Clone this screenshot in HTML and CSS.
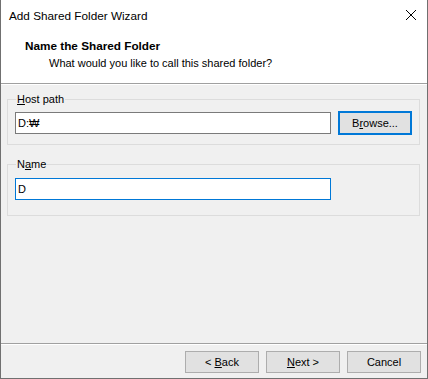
FILE: index.html
```html
<html>
    <head>
        <title>Add Shared Folder Wizard</title>
        <link rel="stylesheet" href="styles.css">
    </head>
    <body>
        <div class="window">
            <div class="titlebar">
                <span class="title">Add Shared Folder Wizard</span>
                <span class="close">
                    <svg width="12" height="12" viewBox="0 0 12 12">
                        <path d="M1 1 L11 11 M11 1 L1 11" stroke="#000" stroke-width="1" fill="none"/>
                    </svg>
                </span>
            </div>
            <div class="header">
                <div class="header-title">Name the Shared Folder</div>
                <div class="header-sub">What would you like to call this shared folder?</div>
            </div>
            <div class="content">
                <fieldset class="group">
                    <legend><u>H</u>ost path</legend>
                    <div class="row host-row">
                        <div class="textbox">D:₩</div>
                        <button class="btn btn-default">B<u>r</u>owse...</button>
                    </div>
                </fieldset>
                <fieldset class="group">
                    <legend>N<u>a</u>me</legend>
                    <div class="row name-row">
                        <div class="textbox focused">D</div>
                    </div>
                </fieldset>
            </div>
            <div class="footer">
                <button class="btn">&lt; <u>B</u>ack</button>
                <button class="btn"><u>N</u>ext &gt;</button>
                <button class="btn">Cancel</button>
            </div>
        </div>
    </body>
</html>
```

FILE: styles.css
```css
* {
    box-sizing: border-box;
}
body {
    margin: 0;
    font-family: "Liberation Sans", Arial, sans-serif;
    font-size: 11px;
    color: #000;
    background: #fff;
}
.window {
    width: 428px;
    height: 379px;
    display: flex;
    flex-direction: column;
    background: #f0f0f0;
    border-left: 1px solid #707070;
    border-right: 1px solid #707070;
    border-bottom: 1px solid #707070;
}
.titlebar {
    height: 30px;
    background: #fff;
    display: flex;
    align-items: center;
    justify-content: space-between;
    padding: 0 8px 0 8px;
}
.title {
    font-size: 11.75px;
}
.close {
    display: flex;
    width: 12px;
    height: 12px;
    margin-right: 2px;
}
.header {
    height: 54px;
    background: #fff;
    padding: 8px 0 0 24px;
    border-bottom: 1px solid #a0a0a0;
    box-shadow: 0 1px 0 #fff;
}
.header-title {
    font-weight: bold;
    font-size: 11.75px;
    line-height: 16px;
}
.header-sub {
    padding-left: 24px;
    line-height: 16px;
    margin-top: 1px;
}
.content {
    flex: 1;
    padding: 7px 7px 0 6px;
}
.group {
    margin: 0 0 11px 0;
    padding: 4px 7px 9px 7px;
    border: 1px solid #dcdcdc;
    min-width: 0;
}
.group legend {
    padding: 0 1px;
    margin-left: 1px;
    line-height: 16px;
}
.row {
    display: flex;
    align-items: center;
}
.name-row {
    padding-top: 2px;
    padding-bottom: 6px;
}
.textbox {
    width: 316px;
    height: 22px;
    background: #fff;
    border: 1px solid #7a7a7a;
    padding: 0 2px;
    line-height: 20px;
}
.textbox.focused {
    border-color: #0078d7;
}
.host-row .textbox {
    margin-right: 7px;
}
.btn {
    width: 74px;
    height: 22px;
    font-family: inherit;
    font-size: 11px;
    background: #e1e1e1;
    border: 1px solid #adadad;
    padding: 0;
    color: #000;
}
.btn-default {
    height: 24px;
    border: 2px solid #0078d7;
}
.footer {
    height: 35px;
    border-top: 1px solid #a0a0a0;
    box-shadow: inset 0 1px 0 #fff;
    display: flex;
    justify-content: flex-end;
    align-items: flex-start;
    gap: 7px;
    padding: 7px 6px 0 0;
}
```
